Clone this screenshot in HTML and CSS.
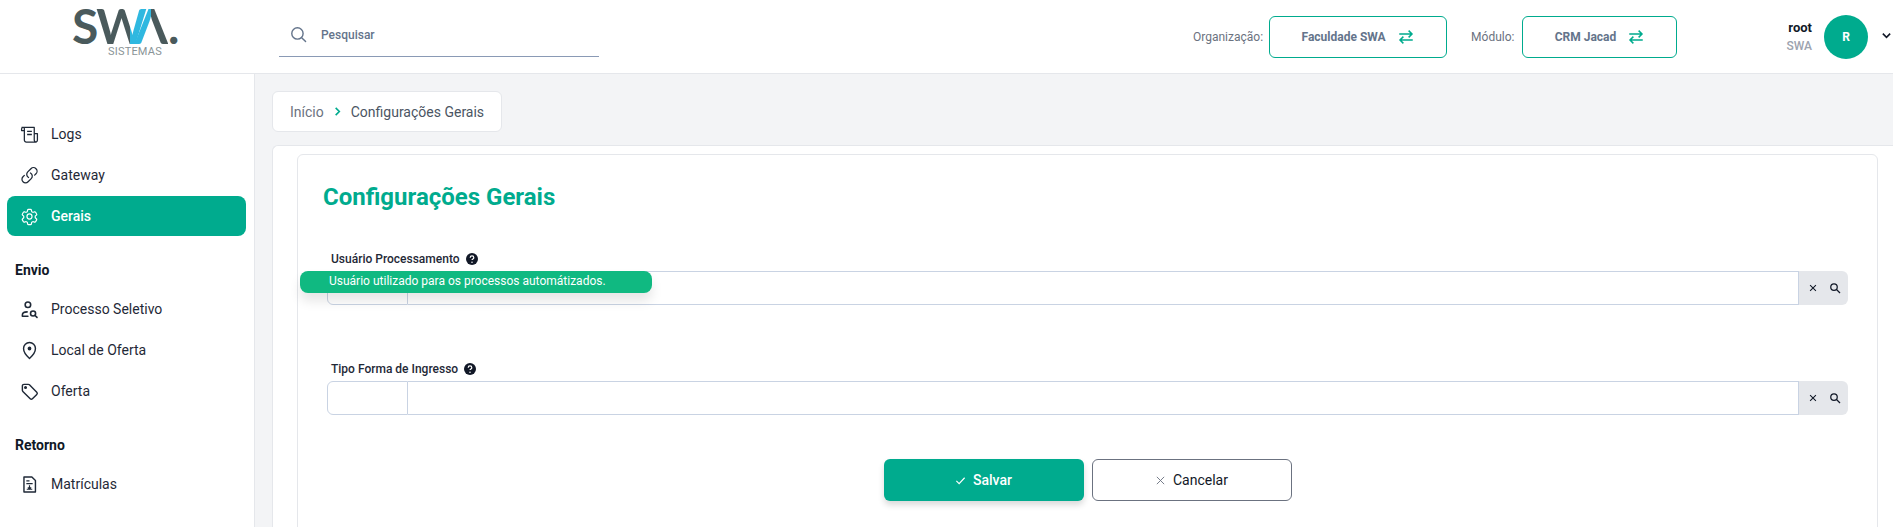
FILE: index.html
```html
<!DOCTYPE html>
<html lang="pt-BR">
<head>
  <meta charset="utf-8">
  <title>Configurações Gerais</title>
  <link rel="stylesheet" href="styles.css">
</head>
<body>
  <header class="topbar">
    <div class="logo" aria-label="SWA Sistemas">
      <div class="logo-mark"><span>S</span><span class="logo-w">W</span><span class="logo-a">Λ</span><span>.</span></div>
      <div class="logo-sub">SISTEMAS</div>
    </div>

    <div class="search">
      <svg class="search-icon" viewBox="0 0 24 24" fill="none" stroke="currentColor" stroke-width="2" stroke-linecap="round"><circle cx="10.5" cy="10.5" r="8"/><path d="M16.5 16.5L22 22"/></svg>
      <span>Pesquisar</span>
    </div>

    <div class="top-right">
      <span class="top-label">Organização:</span>
      <button class="switch switch-org">Faculdade SWA
        <svg viewBox="0 0 24 24" fill="none" stroke="currentColor" stroke-width="2"><path d="M3 8h17M15.500 3.500L20 8l-4.500 4.500M21 16H4M8.500 11.500L4 16l4.500 4.500"/></svg>
      </button>
      <span class="top-label label-mod">Módulo:</span>
      <button class="switch switch-mod">CRM Jacad
        <svg viewBox="0 0 24 24" fill="none" stroke="currentColor" stroke-width="2"><path d="M3 8h17M15.500 3.500L20 8l-4.500 4.500M21 16H4M8.500 11.500L4 16l4.500 4.500"/></svg>
      </button>
      <div class="user">
        <div class="user-name">root</div>
        <div class="user-org">SWA</div>
      </div>
      <div class="avatar">R</div>
      <svg class="user-chevron" viewBox="0 0 24 24" fill="none" stroke="currentColor" stroke-width="3.500"><path d="M4 8l8 8 8-8"/></svg>
    </div>
  </header>

  <div class="layout">
    <nav class="sidebar">
      <a class="nav-item">
        <svg viewBox="0 0 24 24" fill="none" stroke="currentColor" stroke-width="1.600" stroke-linejoin="round"><path d="M2 3h16v16a2.500 2.500 0 0 0 2.500 2.500H8A2.500 2.500 0 0 1 5.500 19V4.500A1.500 1.500 0 0 0 4 3a2 2 0 0 0-2 2v2h3.500M18 11h4v8a2.500 2.500 0 0 1-1.500 2.500M9 8h6M9 12h6"/></svg>
        Logs
      </a>
      <a class="nav-item">
        <svg viewBox="0 0 24 24" fill="none" stroke="currentColor" stroke-width="1.600" stroke-linecap="round"><path d="M13.200 8.800a4.500 4.500 0 0 1 1 7.100l-4 4a4.500 4.500 0 0 1-6.400-6.400l1.700-1.700M18.500 11.500l1.700-1.700a4.500 4.500 0 0 0-6.400-6.400l-4 4a4.500 4.500 0 0 0 1 7.100"/></svg>
        Gateway
      </a>
      <a class="nav-item active">
        <svg viewBox="0 0 24 24" fill="none" stroke="currentColor" stroke-width="1.500" stroke-linejoin="round"><path d="M9.600 3.900c.1-.5.500-.9 1.100-.9h2.600c.6 0 1 .4 1.100.9l.2 1.400c.1.400.3.700.7.900l.6.300c.3.200.7.200 1.100.1l1.300-.5c.5-.2 1.100 0 1.400.5l1.300 2.300c.3.500.2 1.100-.3 1.400l-1.100.9c-.3.200-.4.600-.4 1v.8c0 .4.100.7.400 1l1.100.9c.4.300.6.900.3 1.400l-1.300 2.300c-.3.500-.9.700-1.400.5l-1.300-.5c-.4-.1-.8-.1-1.100.1l-.6.300c-.4.200-.6.500-.7.900l-.2 1.400c-.1.500-.5.900-1.100.9h-2.600c-.6 0-1-.4-1.100-.9l-.2-1.400c-.1-.4-.3-.7-.7-.9l-.6-.3c-.3-.2-.7-.2-1.100-.1l-1.300.5c-.5.200-1.100 0-1.400-.5l-1.300-2.300c-.3-.5-.2-1.100.3-1.400l1.100-.9c.3-.2.400-.6.400-1v-.8c0-.4-.1-.7-.4-1l-1.100-.9c-.4-.3-.6-.9-.3-1.400l1.300-2.300c.3-.5.900-.7 1.400-.5l1.300.5c.4.100.8.100 1.100-.1l.6-.3c.4-.2.600-.5.700-.9z"/><circle cx="12" cy="12" r="3.200"/></svg>
        Gerais
      </a>

      <div class="nav-title nav-title-envio">Envio</div>
      <a class="nav-item">
        <svg viewBox="0 0 24 24" fill="none" stroke="currentColor" stroke-width="2" stroke-linecap="round"><circle cx="10" cy="6" r="3.500"/><path d="M3 20.500h7M3 20.500v-1.500c0-2.500 2.500-4 6-4"/><circle cx="16.500" cy="17" r="3.200"/><path d="M19 19.500l2.500 2.500"/></svg>
        Processo Seletivo
      </a>
      <a class="nav-item">
        <svg viewBox="0 0 24 24" fill="none" stroke="currentColor" stroke-width="1.800" stroke-linejoin="round"><path d="M12 22s7.500-6.500 7.500-12.500a7.500 7.500 0 0 0-15 0C4.500 15.500 12 22 12 22z"/><circle cx="12" cy="9.500" r="1.500" fill="currentColor"/></svg>
        Local de Oferta
      </a>
      <a class="nav-item">
        <svg viewBox="0 0 24 24" fill="none" stroke="currentColor" stroke-width="1.800" stroke-linejoin="round"><path d="M3 5a2 2 0 0 1 2-2h5.500a2 2 0 0 1 1.400.6l9.300 9.300a2 2 0 0 1 0 2.800l-5.500 5.500a2 2 0 0 1-2.800 0L3.600 11.900A2 2 0 0 1 3 10.500z"/><circle cx="7" cy="7" r="1" fill="currentColor"/></svg>
        Oferta
      </a>

      <div class="nav-title nav-title-retorno">Retorno</div>
      <a class="nav-item">
        <svg viewBox="0 0 24 24" fill="none" stroke="currentColor" stroke-width="1.800" stroke-linejoin="round"><path d="M5 2.500h10l4.500 4.500v14.500H5z"/><path d="M8 7.500h4M8 11h8M12 13v5M8.500 18h7M10 15.500l2 2.500 2-2.500" stroke-width="1.500"/></svg>
        Matrículas
      </a>
    </nav>

    <main class="content">
      <div class="breadcrumb">
        <span>Início</span>
        <svg viewBox="0 0 24 24" fill="none" stroke="currentColor" stroke-width="3.500"><path d="M8 4l8 8-8 8"/></svg>
        <span class="crumb-current">Configurações Gerais</span>
      </div>

      <section class="outer-card">
        <div class="inner-card">
          <h1>Configurações Gerais</h1>

          <div class="field">
            <label>Usuário Processamento
              <svg class="help" viewBox="0 0 20 20"><circle cx="10" cy="10" r="10" fill="#111827"/><path d="M7 7.800a3 3 0 0 1 6 0c0 2-3 2-3 4" fill="none" stroke="#fff" stroke-width="2"/><circle cx="10" cy="15.300" r="1.300" fill="#fff"/></svg>
            </label>
            <div class="lookup">
              <div class="lookup-code"></div>
              <div class="lookup-text"></div>
              <div class="lookup-actions">
                <svg viewBox="0 0 24 24" fill="none" stroke="#111827" stroke-width="2.500"><path d="M5 5l14 14M19 5L5 19"/></svg>
                <svg viewBox="0 0 24 24" fill="none" stroke="#111827" stroke-width="2.500"><circle cx="10" cy="10" r="6.500"/><path d="M15 15l7 7"/></svg>
              </div>
            </div>
            <div class="tooltip">Usuário utilizado para os processos automátizados.</div>
          </div>

          <div class="field">
            <label>Tipo Forma de Ingresso
              <svg class="help" viewBox="0 0 20 20"><circle cx="10" cy="10" r="10" fill="#111827"/><path d="M7 7.800a3 3 0 0 1 6 0c0 2-3 2-3 4" fill="none" stroke="#fff" stroke-width="2"/><circle cx="10" cy="15.300" r="1.300" fill="#fff"/></svg>
            </label>
            <div class="lookup">
              <div class="lookup-code"></div>
              <div class="lookup-text"></div>
              <div class="lookup-actions">
                <svg viewBox="0 0 24 24" fill="none" stroke="#111827" stroke-width="2.500"><path d="M5 5l14 14M19 5L5 19"/></svg>
                <svg viewBox="0 0 24 24" fill="none" stroke="#111827" stroke-width="2.500"><circle cx="10" cy="10" r="6.500"/><path d="M15 15l7 7"/></svg>
              </div>
            </div>
          </div>

          <div class="actions">
            <button class="btn btn-save">
              <svg viewBox="0 0 24 24" fill="none" stroke="currentColor" stroke-width="2.500"><path d="M3 13l6 6L21 6"/></svg>
              Salvar
            </button>
            <button class="btn btn-cancel">
              <svg viewBox="0 0 24 24" fill="none" stroke="#6b7280" stroke-width="2"><path d="M4 4l16 16M20 4L4 20"/></svg>
              Cancelar
            </button>
          </div>
        </div>
      </section>
    </main>
  </div>
</body>
</html>
```

FILE: styles.css
```css
* {
  box-sizing: border-box;
}

html, body {
  height: 100%;
}

body {
  margin: 0;
  overflow: hidden;
  font-family: Roboto, "Liberation Sans", sans-serif;
  color: #111827;
  background: #fff;
}

button {
  font-family: inherit;
  cursor: pointer;
}

/* top bar */
.topbar {
  display: flex;
  align-items: center;
  height: 74px;
  border-bottom: 1px solid #e5e7eb;
  background: #fff;
}

.logo {
  width: 279px;
  flex-shrink: 0;
  padding-left: 72px;
  height: 100%;
}

.logo-mark {
  display: flex;
  margin-top: 0;
  height: 46px;
  font-family: Lato, sans-serif;
  font-weight: 700;
  font-size: 48px;
  line-height: 51px;
  color: #4a5a5c;
}

.logo-w {
  margin-left: -2px;
  background: linear-gradient(90deg, #4a5a5c 66%, #2fb8e0 66%);
  -webkit-background-clip: text;
  background-clip: text;
  color: transparent;
}

.logo-a {
  margin-left: -12px;
  background: linear-gradient(90deg, #2fb8e0 50%, #4a5a5c 50%);
  -webkit-background-clip: text;
  background-clip: text;
  color: transparent;
}

.logo-sub {
  margin-left: 36px;
  font-size: 11px;
  line-height: 11px;
  letter-spacing: 0.2px;
  color: #8a9497;
}

.search {
  display: flex;
  align-items: center;
  width: 320px;
  height: 43px;
  margin-top: -3px;
  padding-left: 11px;
  border-bottom: 1px solid #8a9ab5;
  font-size: 12px;
  font-weight: 500;
  color: #64748b;
}

.search-icon {
  width: 17px;
  height: 17px;
  margin-right: 14px;
}

.top-right {
  display: flex;
  align-items: center;
  margin-left: auto;
  height: 100%;
}

.top-label {
  margin-right: 6px;
  font-size: 12px;
  color: #6b7280;
}

.label-mod {
  margin-left: 24px;
  margin-right: 8px;
}

.switch {
  display: flex;
  align-items: center;
  justify-content: center;
  gap: 11px;
  height: 42px;
  background: #fff;
  border: 1px solid #00ab8e;
  border-radius: 6px;
  font-size: 12px;
  font-weight: 700;
  color: #64748b;
}

.switch svg {
  width: 18px;
  height: 18px;
  color: #00ab8e;
}

.switch-org {
  width: 178px;
}

.switch-mod {
  width: 155px;
}

.user {
  margin-left: 109px;
  text-align: right;
}

.user-name {
  font-size: 13px;
  line-height: 18px;
  font-weight: 700;
  color: #111827;
}

.user-org {
  font-size: 12px;
  line-height: 18px;
  font-weight: 500;
  color: #9ca3af;
}

.avatar {
  display: flex;
  align-items: center;
  justify-content: center;
  width: 44px;
  height: 44px;
  margin-left: 12px;
  border-radius: 50%;
  background: #00ab8e;
  color: #fff;
  font-size: 12px;
  font-weight: 700;
}

.user-chevron {
  width: 11px;
  height: 11px;
  margin-left: 13px;
  margin-right: 1px;
  margin-top: -2px;
  color: #111827;
}

/* sidebar */
.layout {
  display: flex;
  height: calc(100% - 74px);
}

.sidebar {
  width: 254px;
  flex-shrink: 0;
  padding: 40px 8px 0 7px;
  background: #fff;
}

.nav-item {
  display: flex;
  align-items: center;
  height: 40px;
  margin-bottom: 1px;
  padding-left: 13px;
  border-radius: 8px;
  font-size: 14px;
  color: #1f2937;
}

.nav-item svg {
  width: 19px;
  height: 19px;
  margin-right: 12px;
  flex-shrink: 0;
}

.nav-item.active {
  background: #00ab8e;
  color: #fff;
  font-weight: 500;
}

.nav-title {
  padding-left: 8px;
  font-size: 14px;
  line-height: 18px;
  font-weight: 700;
  color: #111827;
}

.nav-title-envio {
  margin-top: 25px;
  margin-bottom: 10px;
}

.nav-title-retorno {
  margin-top: 25px;
  margin-bottom: 10px;
}

/* content */
.content {
  flex: 1;
  min-width: 0;
  padding: 17px 0 0 17px;
  background: #f3f4f6;
  border-left: 1px solid #e5e7eb;
}

.breadcrumb {
  display: inline-flex;
  align-items: center;
  height: 41px;
  padding: 0 17px;
  background: #fff;
  border: 1px solid #e5e7eb;
  border-radius: 6px;
  font-size: 14px;
  color: #6b7280;
}

.breadcrumb svg {
  width: 11px;
  height: 11px;
  margin: 0 8px;
  color: #00ab8e;
}

.crumb-current {
  color: #4b5563;
}

.outer-card {
  height: 500px;
  margin-top: 13px;
  padding: 8px 15px 0 24px;
  background: #fff;
  border: 1px solid #e5e7eb;
  border-right: 0;
  border-radius: 6px 0 0 0;
}

.inner-card {
  height: 500px;
  padding: 26px 29px 0 29px;
  border: 1px solid #e5e7eb;
  border-radius: 6px;
}

h1 {
  margin: 0 0 38px -4px;
  font-size: 24px;
  line-height: 32px;
  font-weight: 700;
  color: #00ab8e;
}

.field {
  position: relative;
  margin-bottom: 56px;
}

.field label {
  display: flex;
  align-items: center;
  height: 16px;
  margin-bottom: 4px;
  padding-left: 4px;
  font-size: 12px;
  font-weight: 500;
  color: #1f2937;
}

.help {
  width: 12px;
  height: 12px;
  margin-left: 6px;
}

.lookup {
  display: flex;
  height: 34px;
}

.lookup-code {
  width: 81px;
  border: 1px solid #c9d3e3;
  border-radius: 6px 0 0 6px;
}

.lookup-text {
  flex: 1;
  border: 1px solid #c9d3e3;
  border-left: 0;
}

.lookup-actions {
  display: flex;
  align-items: center;
  justify-content: space-between;
  width: 49px;
  padding: 0 7px 0 9px;
  background: #e5e7eb;
  border-radius: 0 6px 6px 0;
}

.lookup-actions svg {
  width: 10px;
  height: 10px;
}

.lookup-actions svg + svg {
  width: 12px;
  height: 12px;
}

.tooltip {
  position: absolute;
  top: 20px;
  left: -27px;
  width: 352px;
  height: 22px;
  padding-left: 29px;
  background: #10b981;
  border-radius: 8px;
  box-shadow: 0 8px 12px rgba(0, 0, 0, 0.1);
  font-size: 12px;
  line-height: 21px;
  font-weight: 400;
  color: #fff;
}

.actions {
  display: flex;
  justify-content: center;
  gap: 8px;
  margin-top: -12px;
  margin-right: 0;
}

.btn {
  display: flex;
  align-items: center;
  justify-content: center;
  gap: 7px;
  width: 200px;
  height: 42px;
  border-radius: 6px;
  font-size: 14px;
  font-weight: 500;
}

.btn svg {
  width: 11px;
  height: 11px;
}

.btn-save {
  background: #00ab8e;
  border: 0;
  color: #fff;
  box-shadow: 0 4px 6px rgba(0, 0, 0, 0.15);
}

.btn-cancel {
  background: #fff;
  border: 1px solid #6b7280;
  color: #111827;
  font-weight: 400;
}
```
